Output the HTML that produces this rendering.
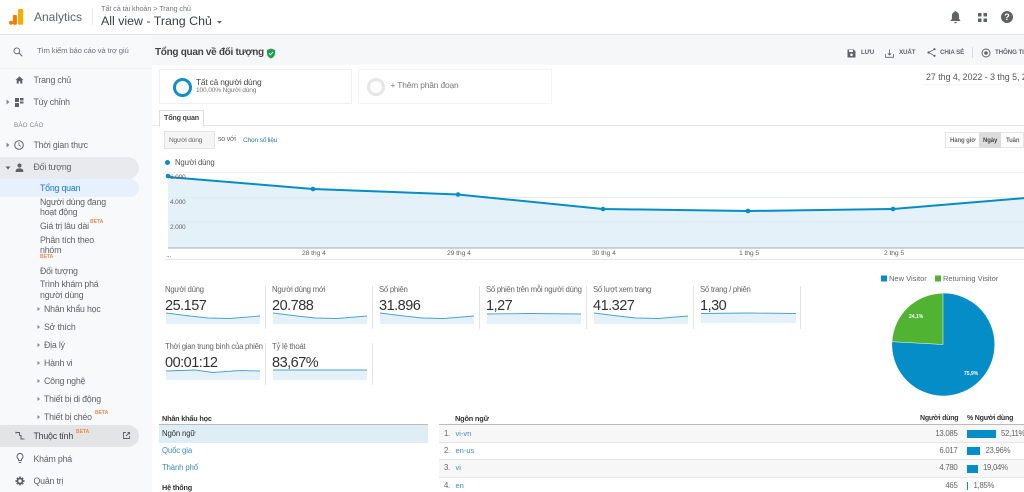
<!DOCTYPE html>
<html lang="vi"><head><meta charset="utf-8"><title>Analytics</title>
<style>
html,body{margin:0;padding:0;width:1024px;height:492px;overflow:hidden;background:#fff}
body{position:relative;font-family:"Liberation Sans","Noto Sans CJK JP",sans-serif;color:#5f6368}
#w{position:absolute;left:0;top:0;width:1024px;height:492px;overflow:hidden;filter:blur(.3px)}
.t{position:absolute;white-space:nowrap;line-height:12px;font-size:8px}
.b{position:absolute}
.s{font-size:8.800px;letter-spacing:-.2px;color:#5f6368}
.m{font-size:7.800px;letter-spacing:-.28px;color:#666}
.v{font-size:14.500px;letter-spacing:-.5px;line-height:18px;color:#333}
.beta{font-size:5px;color:#e98a50;font-weight:bold;line-height:6px}
.lnk{color:#3a8fc4}
.bold{font-weight:bold;color:#333;letter-spacing:-.2px}
.a{font-size:6.800px;letter-spacing:-.1px;color:#666}
.y{font-size:6.600px;letter-spacing:-.2px;color:#666}
.tb{font-size:6.200px;letter-spacing:-.1px;font-weight:bold;color:#5f6368}
.rb{font-size:6px;letter-spacing:-.1px;font-weight:bold;color:#666}
.r{font-size:7.800px;letter-spacing:-.15px}
svg{position:absolute;overflow:visible}
</style></head><body><div id="w">

<!-- sidebar / toolbar backgrounds -->
<div class="b" style="left:0;top:35px;width:152px;height:457px;background:#f8f9fa"></div>
<div class="b" style="left:152px;top:35px;width:872px;height:30px;background:#f6f7f8"></div>
<div class="b" style="left:0;top:34px;width:1024px;height:1px;background:#e3e5e8"></div>
<div class="b" style="left:0;top:68px;width:152px;height:1px;background:#f1f2f3"></div>

<!-- logo -->
<svg style="left:0;top:0" width="30" height="30">
<circle cx="11" cy="22.800" r="2" fill="#f57c00"/>
<rect x="12.900" y="15" width="4" height="9.700" rx="1" fill="#f57c00"/>
<rect x="18" y="9" width="5.200" height="15.700" rx="1.200" fill="#f9ab00"/>
</svg>
<div class="t" style="left:34px;top:10px;font-size:12px;line-height:14px;color:#5f6368">Analytics</div>
<div class="b" style="left:92px;top:8px;width:1px;height:17px;background:#e8eaed"></div>
<div class="t" style="left:101px;top:4px;font-size:7.300px;letter-spacing:-.1px;line-height:10px;color:#70757a">Tất cả tài khoản &gt; Trang chủ</div>
<div class="t" style="left:101px;top:13px;font-size:12.400px;line-height:16px;color:#3c4043">All view - Trang Chủ</div>
<svg style="left:217px;top:20.500px" width="5" height="3"><path d="M0 0H5L2.500 2.500Z" fill="#5f6368"/></svg>

<!-- top right icons -->
<svg style="left:950px;top:10px" width="11" height="14" viewBox="0 0 11 14"><path d="M5.500 1a1 1 0 0 1 1 1c2 .6 2.600 2.200 2.600 4v3l1.200 1.400v.6H.7v-.6L1.900 9V6c0-1.800.6-3.400 2.600-4a1 1 0 0 1 1-1zM4.200 12h2.600a1.300 1.300 0 0 1-2.600 0z" fill="#5f6368"/></svg>
<svg style="left:978px;top:13px" width="10" height="10"><rect x="0" y="0" width="3.500" height="3.500" fill="#5f6368"/><rect x="5.500" y="0" width="3.500" height="3.500" fill="#5f6368"/><rect x="0" y="5.500" width="3.500" height="3.500" fill="#5f6368"/><rect x="5.500" y="5.500" width="3.500" height="3.500" fill="#5f6368"/></svg>
<div class="b" style="left:1001px;top:11px;width:12px;height:12px;border-radius:50%;background:#5f6368;color:#fff;font-size:9px;font-weight:bold;line-height:12px;text-align:center">?</div>

<!-- search -->
<svg style="left:13px;top:46.500px" width="10" height="10" viewBox="0 0 13 13"><circle cx="5" cy="5" r="3.800" fill="none" stroke="#5f6368" stroke-width="1.200"/><path d="M8 8l4 4" stroke="#5f6368" stroke-width="1.300"/></svg>
<div class="t" style="left:37px;top:45px;font-size:7.700px;letter-spacing:-.15px;color:#70757a">Tìm kiếm báo cáo và trợ giú</div>

<!-- nav -->
<svg style="left:15px;top:75.500px" width="9" height="8" viewBox="0 0 11 10"><path d="M5.500 0.500L0.500 5H2V9.500H4.500V6.500H6.500V9.500H9V5H10.500Z" fill="#5f6368"/></svg>
<div class="t s" style="left:33.500px;top:74px">Trang chủ</div>
<svg style="left:6px;top:99px" width="4" height="6"><path d="M0.500 0.500L3.500 3L0.500 5.500Z" fill="#80868b"/></svg>
<svg style="left:14px;top:97.500px" width="11" height="10"><rect x="1" y="0" width="4" height="4" fill="#5f6368"/><rect x="6" y="0" width="3.500" height="2.500" fill="#5f6368"/><rect x="1" y="5" width="4" height="4" fill="#5f6368"/><rect x="6" y="3.500" width="3.500" height="2" fill="#5f6368"/></svg>
<div class="t s" style="left:33.500px;top:96px">Tùy chỉnh</div>
<div class="t" style="left:14px;top:120px;font-size:6.200px;color:#80868b;letter-spacing:.2px">BÁO CÁO</div>
<svg style="left:6px;top:142px" width="4" height="6"><path d="M0.500 0.500L3.500 3L0.500 5.500Z" fill="#80868b"/></svg>
<svg style="left:14px;top:140px" width="11" height="11"><circle cx="5" cy="5" r="4.300" fill="none" stroke="#5f6368" stroke-width="1"/><path d="M5 2.500V5.200L7 6.300" fill="none" stroke="#5f6368" stroke-width=".8"/></svg>
<div class="t s" style="left:33.500px;top:139px">Thời gian thực</div>

<div class="b" style="left:0;top:157px;width:139px;height:22px;background:#e8eaed;border-radius:0 11px 11px 0"></div>
<svg style="left:5px;top:166px" width="6" height="4"><path d="M0.500 0.500H5.500L3 3.500Z" fill="#5f6368"/></svg>
<svg style="left:14.500px;top:162.500px" width="9" height="9" viewBox="0 0 10 10"><circle cx="5" cy="2.800" r="2.300" fill="#5f6368"/><path d="M.8 10V8.500C.8 6.800 3 6 5 6S9.200 6.800 9.200 8.500V10Z" fill="#5f6368"/></svg>
<div class="t s" style="left:33.500px;top:161px">Đối tượng</div>

<div class="b" style="left:0;top:179px;width:139px;height:18px;background:#e6f1fd;border-radius:0 9px 9px 0"></div>
<div class="t s" style="left:40px;top:182px;color:#1a73e8">Tổng quan</div>
<div class="t s" style="left:40px;top:196.500px;line-height:10.500px;white-space:normal;width:75px">Người dùng đang hoạt động</div>
<div class="t s" style="left:40px;top:220px">Giá trị lâu dài</div>
<div class="t beta" style="left:90px;top:219px">BETA</div>
<div class="t s" style="left:40px;top:234.500px;line-height:10.500px;white-space:normal;width:65px">Phân tích theo nhóm</div>
<div class="t beta" style="left:40px;top:253.500px">BETA</div>
<div class="t s" style="left:40px;top:265px">Đối tượng</div>
<div class="t s" style="left:40px;top:279px;line-height:10.500px;white-space:normal;width:70px">Trình khám phá người dùng</div>

<svg style="left:37px;top:306px" width="4" height="90"><path d="M.5 1L3 3L.5 5Z M.5 19L3 21L.5 23Z M.5 37L3 39L.5 41Z M.5 55L3 57L.5 59Z M.5 73L3 75L.5 77Z M.5 91L3 93L.5 95Z M.5 109L3 111L.5 113Z" fill="#80868b"/></svg>
<div class="t s" style="left:44px;top:303px">Nhân khẩu học</div>
<div class="t s" style="left:44px;top:321px">Sở thích</div>
<div class="t s" style="left:44px;top:339px">Địa lý</div>
<div class="t s" style="left:44px;top:357px">Hành vi</div>
<div class="t s" style="left:44px;top:375px">Công nghệ</div>
<div class="t s" style="left:44px;top:393px">Thiết bị di động</div>
<div class="t s" style="left:44px;top:411px">Thiết bị chéo</div>
<div class="t beta" style="left:95px;top:410px">BETA</div>

<div class="b" style="left:0;top:425px;width:139px;height:22px;background:#e3e4e6;border-radius:0 11px 11px 0"></div>
<svg style="left:14.500px;top:431px" width="10" height="10"><path d="M1 1.500H4.500V4.500M4.500 4.500H6V8H9.500M1 .8V2.500" fill="none" stroke="#5f6368" stroke-width="1.100"/></svg>
<div class="t s" style="left:33.500px;top:430px;color:#3c4043">Thuộc tính</div>
<div class="t beta" style="left:76px;top:429px">BETA</div>
<svg style="left:122.500px;top:432px" width="7" height="7"><path d="M3 .5H.5V6.500H6.500V4M3 4L6.500 .5M4.500 .5H6.500V2.500" fill="none" stroke="#5f6368" stroke-width=".9"/></svg>
<svg style="left:15.500px;top:453px" width="9" height="12"><path d="M4 .5A3 3 0 0 1 5.600 6L5.500 7.500H2.500L2.400 6A3 3 0 0 1 4 .5ZM2.800 9.500H5.200" fill="none" stroke="#5f6368" stroke-width="1"/></svg>
<div class="t s" style="left:33.500px;top:453px">Khám phá</div>
<svg style="left:14.500px;top:476px" width="10" height="10" viewBox="0 0 11 11"><circle cx="5.500" cy="5.500" r="2.800" fill="none" stroke="#5f6368" stroke-width="2"/><path d="M5.500 .5V2.500M5.500 8.500V10.500M.5 5.500H2.500M8.500 5.500H10.500M2 2L3.400 3.400M7.600 7.600L9 9M9 2L7.600 3.400M3.400 7.600L2 9" stroke="#5f6368" stroke-width="1.800"/></svg>
<div class="t s" style="left:33.500px;top:475px">Quản trị</div>

<!-- title row -->
<div class="t" style="left:155px;top:46.500px;font-size:10px;letter-spacing:-.3px;font-weight:bold;color:#444">Tổng quan về đối tượng</div>
<svg style="left:266px;top:48px" width="10" height="11"><path d="M5 .5L9 2V5.500C9 8 7 9.800 5 10.500C3 9.800 1 8 1 5.500V2Z" fill="#1e9e4f"/><path d="M3 5.300L4.500 6.800L7 4" fill="none" stroke="#fff" stroke-width="1"/></svg>

<svg style="left:847px;top:48.500px" width="9" height="9"><path d="M.5 .5H6.800L8.500 2.200V8.500H.5Z" fill="#5f6368"/><rect x="2" y="1" width="4" height="2" fill="#f6f7f8"/><circle cx="4.500" cy="5.800" r="1.300" fill="#f6f7f8"/></svg>
<div class="t tb" style="left:861px;top:46.500px">LƯU</div>
<svg style="left:885px;top:48.500px" width="9" height="9"><path d="M.5 5V8.300H8.500V5M4.500 .5V6M2.800 4.300L4.500 6L6.200 4.300" fill="none" stroke="#5f6368" stroke-width=".8"/></svg>
<div class="t tb" style="left:899px;top:46.500px">XUẤT</div>
<svg style="left:926.500px;top:48px" width="9" height="9"><path d="M7.500 1.200L1.500 4.500L7.500 7.800" fill="none" stroke="#5f6368" stroke-width=".8"/><circle cx="7.500" cy="1.200" r="1.100" fill="#5f6368"/><circle cx="1.500" cy="4.500" r="1.100" fill="#5f6368"/><circle cx="7.500" cy="7.800" r="1.100" fill="#5f6368"/></svg>
<div class="t tb" style="left:940px;top:46.500px">CHIA SẺ</div>
<div class="b" style="left:972px;top:47px;width:1px;height:11px;background:#dadce0"></div>
<svg style="left:981px;top:48px" width="10" height="10"><circle cx="5" cy="5" r="4" fill="none" stroke="#5f6368" stroke-width="1"/><circle cx="5" cy="5" r="1.800" fill="#5f6368"/></svg>
<div class="t tb" style="left:995px;top:46.500px">THÔNG TIN</div>

<!-- segments -->
<div class="b" style="left:159px;top:69px;width:191px;height:33px;border:1px solid #eeeff0"></div>
<div class="b" style="left:173px;top:77.500px;width:13px;height:13px;border:3px solid #0f8fc8;border-radius:50%"></div>
<div class="t" style="left:196px;top:76px;font-size:8.400px;letter-spacing:-.2px;color:#444">Tất cả người dùng</div>
<div class="t" style="left:196px;top:85px;font-size:6.600px;letter-spacing:-.15px;color:#777">100,00% Người dùng</div>
<div class="b" style="left:358px;top:69px;width:192px;height:33px;border:1px solid #f3f3f3"></div>
<div class="b" style="left:367px;top:78px;width:12px;height:12px;border:3px solid #e6e6e6;border-radius:50%"></div>
<div class="t" style="left:390.500px;top:79px;font-size:8.400px;letter-spacing:-.15px;color:#777">+ Thêm phân đoạn</div>
<div class="t" style="left:926px;top:71px;font-size:8.800px;color:#555">27 thg 4, 2022 - 3 thg 5, 2022</div>
<div class="b" style="left:924px;top:84px;width:100px;height:1px;background:#f6f6f6"></div>

<!-- tab -->
<div class="b" style="left:153px;top:125px;width:871px;height:1px;background:#e4e4e4"></div>
<div class="b" style="left:159px;top:110px;width:43px;height:15px;background:#fff;border:1px solid #dedede;border-bottom:1px solid #fff"></div>
<div class="t" style="left:164px;top:112px;font-size:7.200px;letter-spacing:-.2px;font-weight:bold;color:#444">Tổng quan</div>

<div class="b" style="left:164px;top:131px;width:49px;height:16px;background:#f5f5f5;border:1px solid #e4e4e4"></div>
<div class="t" style="left:169px;top:134.500px;font-size:6.600px;letter-spacing:-.2px;color:#666">Người dùng</div>
<div class="t" style="left:218px;top:133.500px;font-size:7px;letter-spacing:-.2px;color:#666">so với</div>
<div class="t" style="left:243px;top:134.500px;font-size:6.600px;letter-spacing:-.2px;color:#2a7ab8">Chọn số liệu</div>

<div class="b" style="left:945px;top:132px;width:79px;height:16px;background:#fff;border:1px solid #e4e4e4;box-sizing:border-box"></div>
<div class="b" style="left:979px;top:132px;width:22px;height:16px;background:#dcdcdc"></div>
<div class="t rb" style="left:950px;top:134.500px">Hàng giờ</div>
<div class="t rb" style="left:983px;top:134.500px;color:#444">Ngày</div>
<div class="t rb" style="left:1006px;top:134.500px">Tuần</div>

<!-- chart -->
<div class="b" style="left:165px;top:160px;width:5px;height:5px;border-radius:50%;background:#058dc7"></div>
<div class="t" style="left:175px;top:157px;font-size:7.800px;letter-spacing:-.2px;color:#555">Người dùng</div>
<svg style="left:0;top:0" width="1024" height="492">
<path d="M168 172.500H1024M168 197.500H1024M168 222H1024" stroke="#eee" stroke-width="1"/>
<path d="M168 177L313 189L458 194.500L603 209L748 211L893 209L1038 197V248H168Z" fill="#e4f1f9"/>
<path d="M168 222H1024M168 197.500H1024" stroke="#dfe8ee" stroke-width=".5"/>
<path d="M168 177L313 189L458 194.500L603 209L748 211L893 209L1038 197" fill="none" stroke="#058dc7" stroke-width="2"/>
<g fill="#058dc7"><circle cx="168" cy="176" r="2.300"/><circle cx="313" cy="189" r="2.300"/><circle cx="458" cy="194.500" r="2.300"/><circle cx="603" cy="209" r="2.300"/><circle cx="748" cy="211" r="2.300"/><circle cx="893" cy="209" r="2.300"/></g>
<path d="M168 248H1024" stroke="#aaa" stroke-width="1"/>
<path d="M165 259.500H1024" stroke="#e3e3e3" stroke-width="1"/>
</svg>
<div class="t y" style="left:170px;top:171.500px">6.000</div>
<div class="t y" style="left:170px;top:196.500px">4.000</div>
<div class="t y" style="left:170px;top:221.500px">2.000</div>
<div class="t m" style="left:166px;top:250px;font-size:7px">...</div>
<div class="t a" style="left:302px;top:248px">28 thg 4</div>
<div class="t a" style="left:447px;top:248px">29 thg 4</div>
<div class="t a" style="left:592px;top:248px">30 thg 4</div>
<div class="t a" style="left:739px;top:248px">1 thg 5</div>
<div class="t a" style="left:884px;top:248px">2 thg 5</div>

<!-- metrics -->
<div class="t m" style="left:165px;top:283.500px">Người dùng</div><div class="t v" style="left:165px;top:296.500px">25.157</div>
<div class="t m" style="left:272px;top:283.500px">Người dùng mới</div><div class="t v" style="left:272px;top:296.500px">20.788</div>
<div class="t m" style="left:379px;top:283.500px">Số phiên</div><div class="t v" style="left:379px;top:296.500px">31.896</div>
<div class="t m" style="left:486px;top:283.500px">Số phiên trên mỗi người dùng</div><div class="t v" style="left:486px;top:296.500px">1,27</div>
<div class="t m" style="left:593px;top:283.500px">Số lượt xem trang</div><div class="t v" style="left:593px;top:296.500px">41.327</div>
<div class="t m" style="left:700px;top:283.500px">Số trang / phiên</div><div class="t v" style="left:700px;top:296.500px">1,30</div>
<div class="t m" style="left:165px;top:341px">Thời gian trung bình của phiên</div><div class="t v" style="left:165px;top:353.500px">00:01:12</div>
<div class="t m" style="left:272px;top:341px">Tỷ lệ thoát</div><div class="t v" style="left:272px;top:353.500px">83,67%</div>
<svg style="left:0;top:0" width="1024" height="492">
<g fill="#e4f1f9">
<path d="M166 313L190 316L208 318L230 318.500L260 316V324H166Z"/><path d="M273 313L297 316L315 318L337 318.500L367 316V324H273Z"/><path d="M380 313L404 316L422 318L444 318.500L474 316V324H380Z"/>
<path d="M487 314L530 313.500L581 314V324H487Z"/><path d="M594 313L618 316L636 318L658 318.500L688 316V324H594Z"/><path d="M701 313.500L750 313L796 313.500V323H701Z"/>
<path d="M166 371L195 370L213 372.500L240 370.500L260 371V380H166Z"/><path d="M273 370L367 370V380H273Z"/></g>
<g fill="none" stroke="#4aa3cf" stroke-width=".9">
<path d="M166 313L190 316L208 318L230 318.500L260 316"/><path d="M273 313L297 316L315 318L337 318.500L367 316"/><path d="M380 313L404 316L422 318L444 318.500L474 316"/>
<path d="M487 314L530 313.500L581 314"/><path d="M594 313L618 316L636 318L658 318.500L688 316"/><path d="M701 313.500L750 313L796 313.500"/>
<path d="M166 371L195 370L213 372.500L240 370.500L260 371"/><path d="M273 370L367 370"/></g>
<g stroke="#e3e3e3" stroke-width="1"><path d="M265.500 286V329M372.500 286V329M479.500 286V329M586.500 286V329M693.500 286V329M800.500 286V329M265.500 343V385M372.500 343V385"/></g>
<!-- pie -->
<circle cx="943.300" cy="344.500" r="51.200" fill="#058dc7"/>
<path d="M943 344.500L892 341.700A51.200 51.200 0 0 1 943 293.300Z" fill="#50b432" stroke="#fff" stroke-width=".5"/>
<rect x="881" y="275.500" width="6" height="6" fill="#058dc7"/><rect x="935" y="275.500" width="6" height="6" fill="#50b432"/>
</svg>
<div class="t" style="left:889px;top:272.500px;font-size:7.500px;color:#666">New Visitor</div>
<div class="t" style="left:943px;top:272.500px;font-size:7.500px;color:#666">Returning Visitor</div>
<div class="t" style="left:909px;top:310.500px;font-size:5px;font-weight:bold;color:#fff">24,1%</div>
<div class="t" style="left:964px;top:368px;font-size:5px;font-weight:bold;color:#fff">75,9%</div>

<!-- tables -->
<div class="t bold" style="left:162px;top:412.500px;font-size:7.300px">Nhân khẩu học</div>
<div class="b" style="left:159px;top:424px;width:269px;height:1px;background:#bbb"></div>
<div class="b" style="left:159px;top:425px;width:269px;height:18px;background:#dfedf4"></div>
<div class="t r" style="left:162px;top:428px;color:#333">Ngôn ngữ</div>
<div class="t r lnk" style="left:162px;top:445px">Quốc gia</div>
<div class="t r lnk" style="left:162px;top:462px">Thành phố</div>
<div class="t bold" style="left:162px;top:482px;font-size:7.300px">Hệ thống</div>

<div class="t bold" style="left:455px;top:412.500px;font-size:7.400px">Ngôn ngữ</div>
<div class="t bold" style="left:920px;top:412.500px;font-size:7px">Người dùng</div>
<div class="t bold" style="left:967px;top:412.500px;font-size:7px">% Người dùng</div>
<div class="b" style="left:439px;top:424px;width:585px;height:1px;background:#bbb"></div>
<div class="b" style="left:439px;top:425px;width:585px;height:17px;background:#f7f7f7"></div>
<div class="b" style="left:439px;top:442px;width:585px;height:1px;background:#e6e6e6"></div>
<div class="b" style="left:439px;top:459px;width:585px;height:1px;background:#e6e6e6"></div>
<div class="b" style="left:439px;top:460px;width:585px;height:17px;background:#f7f7f7"></div>
<div class="b" style="left:439px;top:477px;width:585px;height:1px;background:#e6e6e6"></div>

<div class="t m" style="left:444px;top:428px">1.</div><div class="t lnk" style="left:455.500px;top:428px;font-size:7.500px">vi-vn</div>
<div class="t m" style="left:444px;top:445px">2.</div><div class="t lnk" style="left:455.500px;top:445px;font-size:7.500px">en-us</div>
<div class="t m" style="left:444px;top:462px">3.</div><div class="t lnk" style="left:455.500px;top:462px;font-size:7.500px">vi</div>
<div class="t m" style="left:444px;top:480px">4.</div><div class="t lnk" style="left:455.500px;top:480px;font-size:7.500px">en</div>

<div class="t m" style="right:66.500px;top:428px">13.085</div>
<div class="t m" style="right:66.500px;top:445px">6.017</div>
<div class="t m" style="right:66.500px;top:462px">4.780</div>
<div class="t m" style="right:66.500px;top:480px">465</div>
<div class="b" style="left:967px;top:430px;width:28.500px;height:8px;background:#058dc7"></div>
<div class="b" style="left:967px;top:447px;width:13px;height:8px;background:#058dc7"></div>
<div class="b" style="left:967px;top:465px;width:10.500px;height:8px;background:#058dc7"></div>
<div class="b" style="left:967px;top:482px;width:1px;height:8px;background:#058dc7"></div>
<div class="t m" style="left:1001px;top:428px">52,11%</div>
<div class="t m" style="left:985.500px;top:445px">23,96%</div>
<div class="t m" style="left:983px;top:462px">19,04%</div>
<div class="t m" style="left:973.500px;top:480px">1,85%</div>

</div></body></html>
